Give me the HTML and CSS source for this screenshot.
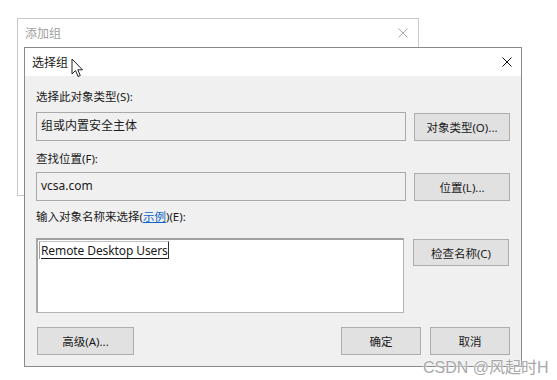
FILE: index.html
```html
<!DOCTYPE html>
<html lang="zh-CN">
<head>
    <meta charset="UTF-8" />
    <title>选择组</title>
    <link rel="stylesheet" href="styles.css">
</head>
<body>
<div class="desktop">
    <div class="win win-back">
        <div class="titlebar">
            <span class="title">添加组</span>
            <svg class="close" width="10" height="10" viewBox="0 0 10 10"><path d="M0.5 0.5 L9.5 9.5 M9.5 0.5 L0.5 9.5" stroke="#a8a8a8" stroke-width="1"/></svg>
        </div>
    </div>

    <div class="win win-front">
        <div class="titlebar">
            <span class="title">选择组</span>
            <svg class="close" width="10" height="10" viewBox="0 0 10 10"><path d="M0.5 0.5 L9.5 9.5 M9.5 0.5 L0.5 9.5" stroke="#111" stroke-width="1"/></svg>
        </div>
        <div class="panel">
            <div class="label lbl-first">选择此对象类型(S):</div>
            <div class="row">
                <div class="field">组或内置安全主体</div>
                <button class="btn">对象类型(O)...</button>
            </div>

            <div class="label lbl-second">查找位置(F):</div>
            <div class="row">
                <div class="field">vcsa.com</div>
                <button class="btn">位置(L)...</button>
            </div>

            <div class="label lbl-third">输入对象名称来选择(<a class="link">示例</a>)(E):</div>
            <div class="row row-names">
                <div class="names"><span class="resolved">Remote Desktop Users</span></div>
                <button class="btn">检查名称(C)</button>
            </div>

            <div class="footer">
                <button class="btn btn-adv">高级(A)...</button>
                <div class="actions">
                    <button class="btn btn-act">确定</button>
                    <button class="btn btn-act">取消</button>
                </div>
            </div>
        </div>
    </div>

    <svg class="cursor" width="13" height="20" viewBox="0 0 13 20">
        <path d="M1 1 L1 16 L4.5 12.5 L7 18.5 L9.3 17.5 L6.8 11.8 L11.5 11.8 Z" fill="#fff" stroke="#222" stroke-width="1" stroke-linejoin="round"/>
    </svg>

    <div class="watermark">CSDN @风起时H</div>
</div>
</body>
</html>
```

FILE: styles.css
```css
body {
    margin: 0;
    background: #fff;
    font-family: "Noto Sans", "Noto Sans CJK SC", sans-serif;
    font-size: 11.5px;
    color: #1a1a1a;
}
.desktop {
    position: relative;
    width: 557px;
    height: 380px;
    overflow: hidden;
}
.win {
    position: absolute;
    box-sizing: border-box;
}
.win-back {
    left: 17px;
    top: 18px;
    width: 402px;
    height: 178px;
    border: 1px solid #c9c9c9;
    background: #fff;
}
.win-back .titlebar {
    height: 28px;
    padding: 0 10px 0 7px;
}
.win-back .title {
    color: #a0a0a0;
}
.win-front {
    left: 24px;
    top: 47px;
    width: 498px;
    height: 320px;
    border: 1px solid #8a8a8a;
    background: #f0f0f0;
    display: flex;
    flex-direction: column;
}
.titlebar {
    display: flex;
    align-items: center;
    justify-content: space-between;
    background: #fff;
}
.win-front .titlebar {
    height: 28px;
    padding: 0 9px 0 7px;
}
.title {
    font-size: 12px;
}
.panel {
    padding: 13px 11px 0 11px;
    display: flex;
    flex-direction: column;
}
.label {
    height: 16px;
    line-height: 16px;
}
.lbl-first { margin-bottom: 7px; }
.lbl-second { margin-top: 10px; margin-bottom: 5px; }
.lbl-third { margin-top: 8px; margin-bottom: 13px; }
.link {
    color: #0a64c8;
    text-decoration: underline;
}
.row {
    display: grid;
    grid-template-columns: 1fr 96px;
    column-gap: 8px;
    align-items: start;
}
.field {
    box-sizing: border-box;
    height: 29px;
    border: 1px solid #a9a9a9;
    padding: 0 4px;
    line-height: 25px;
    font-size: 12px;
}
.btn {
    box-sizing: border-box;
    height: 28px;
    margin-top: 1px;
    border: 1px solid #adadad;
    background: #e1e1e1;
    font-family: inherit;
    font-size: 11.5px;
    color: #1a1a1a;
    padding: 0;
}
.row-names {
    grid-template-columns: 368px 96px;
    column-gap: 9px;
}
.names {
    box-sizing: border-box;
    height: 75px;
    background: #fff;
    border: 1px solid #b4b4b4;
    border-top: 2px solid #a0a0a0;
    border-left: 2px solid #a8a8a8;
    padding: 1px 0 0 1px;
}
.resolved {
    display: inline-block;
    font-size: 12px;
    line-height: 16px;
    padding: 1px 0 0 1px;
    letter-spacing: -0.1px;
    border-left: 1px solid #a0a0a0;
    border-top: 1px solid #c0c0c0;
    border-right: 1px solid #333;
    text-decoration: underline;
    text-underline-offset: 3px;
}
.row-names .btn {
    height: 27px;
    margin-top: 1px;
}
.footer {
    display: flex;
    justify-content: space-between;
    margin-top: 13px;
}
.btn-adv {
    width: 97px;
    margin-left: 1px;
}
.actions {
    display: flex;
    gap: 9px;
}
.btn-act {
    width: 80px;
}
.cursor {
    position: absolute;
    left: 71px;
    top: 58px;
}
.watermark {
    position: absolute;
    left: 423px;
    top: 354px;
    font-family: "Liberation Sans", "Noto Sans CJK SC", sans-serif;
    font-size: 16px;
    color: #a8a8a8;
    text-shadow: 0 0 2px #fff, 0 0 1px #fff;
}
```
